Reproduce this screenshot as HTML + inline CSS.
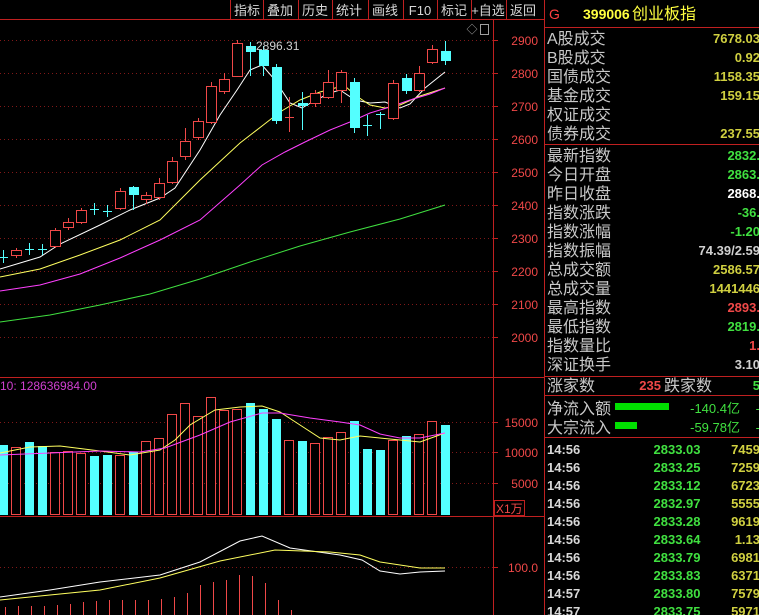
<!DOCTYPE html>
<html><head><meta charset="utf-8">
<style>
html,body{margin:0;padding:0;background:#000;width:759px;height:615px;overflow:hidden}
svg{display:block}
text{font-family:"Liberation Sans","Noto Sans CJK SC",sans-serif}
</style></head><body>
<svg id="s" width="759" height="615" xmlns="http://www.w3.org/2000/svg">
</svg>
<script>
var s=document.getElementById('s'),h='';
function L(x1,y1,x2,y2,c,d){h+='<line x1="'+x1+'" y1="'+y1+'" x2="'+x2+'" y2="'+y2+'" stroke="'+c+'" stroke-width="1"'+(d?' stroke-dasharray="1,3"':'')+'/>';}
function T(x,y,t,c,sz,a,w){h+='<text x="'+x+'" y="'+y+'" fill="'+c+'" font-size="'+sz+'"'+(a?' text-anchor="'+a+'"':'')+(w?' font-weight="bold"':'')+'>'+t+'</text>';}
function P(pts,c){h+='<polyline fill="none" stroke="'+c+'" stroke-width="1" points="'+pts+'"/>';}
var R='#c02020',RED='#f04848',CY='#54ffff';
// grid dotted lines
[40,73,106,139,172,205,238,271,304,337].forEach(function(y){L(0,y+0.5,493,y+0.5,'#801818',1);});
[422,452,483].forEach(function(y){L(0,y+0.5,493,y+0.5,'#801818',1);});
L(0,567.5,493,567.5,'#801818',1);
// frame
L(0,19.5,545,19.5,R);L(493.5,20,493.5,615,R);L(544.5,0,544.5,615,R);
L(0,377.5,545,377.5,R);L(0,516.5,545,516.5,R);
// toolbar
var tb=[['指标',230],['叠加',263],['历史',298],['统计',332],['画线',368],['F10',403],['标记',437],['+自选',471],['返回',506]];
tb.forEach(function(b,i){L(b[1]+0.5,0,b[1]+0.5,19,R);T(b[1]+17,15,b[0],'#d8d8d8',13,'middle');});
// axis labels
[[2900,40],[2800,73],[2700,106],[2600,139],[2500,172],[2400,205],[2300,238],[2200,271],[2100,304],[2000,337]].forEach(function(a){L(493,a[1]+.5,498,a[1]+.5,R);T(538,a[1]+5,a[0],RED,12,'end');});
[[15000,422],[10000,452],[5000,483]].forEach(function(a){L(493,a[1]+.5,498,a[1]+.5,R);T(538,a[1]+5,a[0],RED,12,'end');});
L(493,567.5,498,567.5,R);T(538,572,'100.0',RED,12,'end');
h+='<rect x="494.5" y="500.5" width="30" height="15" fill="none" stroke="'+R+'"/>';T(496,513,'X1万',RED,12);
T(472,33,'◇','#a0a0a0',11,'middle');h+='<rect x="480.5" y="24.5" width="8" height="10" fill="none" stroke="#a0a0a0"/>';
// MA lines price
P('0,269 40,257 60,244 100,225 130,210 160,198 175,188 200,150 220,115 237,90 250,70 262,65 275,80 290,103 302,108 316,100 330,93 340,90 355,100 370,103 385,102 400,108 410,104 425,88 445,72','#ffffff');
P('0,277 40,269 80,255 120,240 160,220 200,180 240,143 262,126 280,112 300,100 320,92 335,88 345,86 355,95 370,105 385,108 400,105 420,96 445,88','#ffff60');
P('0,291 40,285 80,274 120,258 160,240 200,220 240,185 262,165 285,152 305,142 330,130 350,122 370,113 390,107 410,100 430,94 445,88','#ff40ff');
P('0,322 50,315 100,305 150,294 200,279 250,262 300,246 350,232 400,219 445,205','#40e040');
// candles [top,bottom,high,low,color]
var C=[[257,259,250,263,'c'],[250,255,248,258,'r'],[249,249,243,255,'c'],[249,249,244,255,'c'],[230,246,228,248,'r'],[222,227,218,230,'r'],[210,222,208,224,'r'],[209,209,203,215,'c'],[211,211,205,217,'c'],[191,208,188,210,'r'],[187,195,186,210,'cf'],[195,199,192,204,'r'],[183,197,178,200,'r'],[161,182,157,184,'r'],[141,156,128,160,'r'],[121,137,118,140,'r'],[86,122,82,124,'r'],[79,91,73,94,'r'],[43,76,40,77,'r'],[46,52,42,76,'cf'],[50,66,46,76,'cf'],[67,121,64,124,'cf'],[117,119,97,132,'r'],[103,106,92,130,'cf'],[93,103,90,107,'r'],[82,97,70,99,'r'],[72,90,70,103,'r'],[82,128,78,133,'cf'],[125,127,115,136,'cf'],[114,116,112,129,'cf'],[83,118,80,120,'r'],[78,91,74,94,'cf'],[73,90,66,92,'r'],[49,62,45,64,'r'],[51,61,41,65,'cf']];
C.forEach(function(c,i){var x=3+13*i,col=c[4]=='r'?RED:CY;
 L(x+.5,c[2],x+.5,c[3],col);
 if(c[1]-c[0]<=2){L(x-4,c[0]+.5,x+5,c[0]+.5,col);}
 else if(c[4]=='r'){L(x+.5,c[2],x+.5,c[0],col);h+='<rect x="'+(x-4.5)+'" y="'+(c[0]+.5)+'" width="10" height="'+(c[1]-c[0])+'" fill="#000" stroke="'+col+'"/>';}
 else h+='<rect x="'+(x-4)+'" y="'+c[0]+'" width="10" height="'+(c[1]-c[0])+'" fill="'+col+'"/>';
});
T(244,50,'←2896.31','#d0d0d0',12);
// volume
var V=[[445,'c'],[447,'r'],[442,'c'],[446,'c'],[452,'r'],[451,'r'],[453,'r'],[456,'c'],[455,'c'],[455,'r'],[452,'c'],[441,'r'],[438,'r'],[414,'r'],[403,'r'],[416,'r'],[397,'r'],[410,'r'],[409,'r'],[403,'c'],[409,'c'],[419,'c'],[440,'r'],[441,'c'],[443,'r'],[437,'r'],[432,'r'],[421,'c'],[449,'c'],[450,'c'],[440,'r'],[436,'c'],[434,'r'],[421,'r'],[425,'c']];
V.forEach(function(v,i){var x=3+13*i;
 if(v[1]=='r')h+='<rect x="'+(x-4.5)+'" y="'+(v[0]+.5)+'" width="9" height="'+(514-v[0])+'" fill="#000" stroke="'+RED+'"/>';
 else h+='<rect x="'+(x-4)+'" y="'+v[0]+'" width="9" height="'+(515-v[0])+'" fill="'+CY+'"/>';});
P('0,453 30,447 60,446 100,451 130,455 160,450 175,440 190,425 215,410 240,407 262,406 280,412 300,425 320,438 340,440 360,436 380,438 400,440 420,442 445,433','#ffff60');
P('0,455 50,453 100,451 140,452 165,448 200,435 230,422 262,413 280,413 310,418 340,422 360,425 380,434 400,438 420,438 445,433','#ff40ff');
T(0,390,'10: 128636984.00','#d040d0',12);
// bottom indicator
P('0,597 50,590 100,582 160,575 200,562 240,541 262,536 290,548 340,555 362,560 380,571 400,574 420,572 445,571','#ffffff');
P('0,600 100,590 160,578 220,561 275,550 330,552 360,555 380,562 420,568 445,568','#ffff60');
var st=[607,606,606,606,605,604,602,601,600,600,600,600,599,597,593,585,582,580,575,576,583,600,610];
st.forEach(function(t,i){var x=5+13*i;L(x+.5,t,x+.5,615,RED);});
// right panel
L(545,27.5,759,27.5,R);L(545,144.5,759,144.5,R);L(545,376.5,759,376.5,R);L(545,395.5,759,395.5,R);L(545,437.5,759,437.5,R);
T(549,19,'G','#ff4040',14);T(583,19,'399006','#ffff40',14,0,1);T(632,19,'创业板指','#ffff40',16);
var LB='#c8c8c8',YL='#d0d040',GR='#40e040',WH='#ffffff';
var rows=[['A股成交','7678.03',YL],['B股成交','0.92',YL],['国债成交','1158.35',YL],['基金成交','159.15',YL],['权证成交','',YL],['债券成交','237.55',YL]];
rows.forEach(function(r,i){var y=44+19*i;T(547,y,r[0],LB,16);T(760,y-1,r[1],r[2],13,'end',1);});
var r2=[['最新指数','2832.',GR],['今日开盘','2863.',GR],['昨日收盘','2868.',WH],['指数涨跌','-36.',GR],['指数涨幅','-1.20',GR],['指数振幅','74.39/2.59','#d0d0d0'],['总成交额','2586.57',YL],['总成交量','1441446',YL],['最高指数','2893.',RED],['最低指数','2819.',GR],['指数量比','1.',RED],['深证换手','3.10','#d0d0d0']];
r2.forEach(function(r,i){var y=161+19*i;T(547,y,r[0],LB,16);T(760,y-1,r[1],r[2],13,'end',1);});
T(547,391,'涨家数',LB,16);T(661,390,'235',RED,13,'end',1);T(664,391,'跌家数',LB,16);T(760,390,'5',GR,13,'end',1);
T(547,414,'净流入额',LB,16);h+='<rect x="615" y="403" width="54" height="7" fill="#00e000"/>';T(740,413,'-140.4亿',GR,13,'end');T(760,413,'-',GR,13,'end');
T(547,433,'大宗流入',LB,16);h+='<rect x="615" y="422" width="22" height="7" fill="#00e000"/>';T(740,432,'-59.78亿',GR,13,'end');T(760,432,'-',GR,13,'end');
var tk=[['14:56','2833.03','7459'],['14:56','2833.25','7259'],['14:56','2833.12','6723'],['14:56','2832.97','5555'],['14:56','2833.28','9619'],['14:56','2833.64','1.13'],['14:56','2833.79','6981'],['14:56','2833.83','6371'],['14:57','2833.80','7579'],['14:57','2833.75','5971']];
tk.forEach(function(r,i){var y=454+18*i;T(547,y,r[0],'#d8d8d8',13,0,1);T(677,y,r[1],GR,13,'middle',1);T(760,y,r[2],YL,13,'end',1);});
s.innerHTML=h;
</script>
</body></html>
